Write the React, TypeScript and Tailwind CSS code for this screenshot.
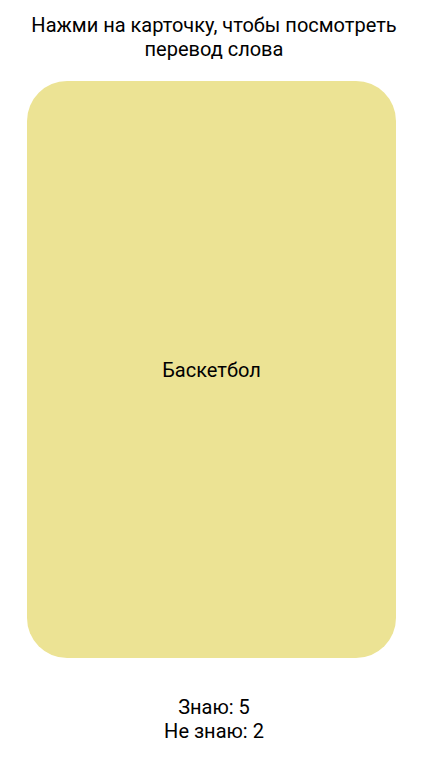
export default function App() {
  return (
    <div
      className="flex h-[758px] w-full flex-col items-center bg-white text-black"
      style={{ fontFamily: 'Roboto, "Noto Sans", sans-serif' }}
    >
      <p className="mt-[13px] text-center text-[20px] leading-[24px]">
        Нажми на карточку, чтобы посмотреть
        <br />
        перевод слова
      </p>
      <div className="mt-[20px] ml-[-5px] flex h-[577px] w-[369px] cursor-pointer items-center justify-center rounded-[40px] bg-[#ece394]">
        <span className="text-[20px] leading-[24px]">Баскетбол</span>
      </div>
      <div className="mt-[37px] text-center text-[20px] leading-[24px]">
        <p>Знаю: 5</p>
        <p>Не знаю: 2</p>
      </div>
    </div>
  );
}
